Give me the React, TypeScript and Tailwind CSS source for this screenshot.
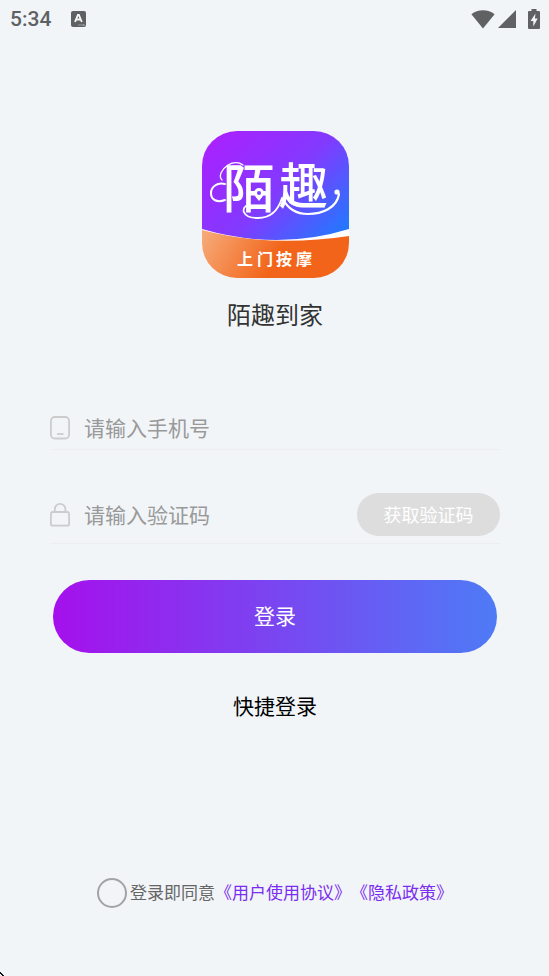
import { useState } from "react";

const fontStack = "font-['Roboto','Noto_Sans_CJK_SC',sans-serif]";

function StatusBar() {
  return (
    <header className="flex h-[38px] items-center justify-between pr-[9px] pl-[10px] text-[#5f6163]">
      <div className="flex items-center gap-5">
        <span className="text-[21px] leading-[38px] font-medium">5:34</span>
        <svg className="h-4 w-[15px]" viewBox="0 0 15 16" aria-hidden="true">
          <rect width="15" height="16" rx="2" fill="currentColor" />
          <path d="M4 11 6.9 3.8h1L10.8 11M5.2 8.5h4.4" fill="none" stroke="#f8f8f8" strokeWidth="1.8" />
          <path d="M7.5 14h1m1 0h1m1 0h2" stroke="#d4d4d4" strokeWidth="1" />
        </svg>
      </div>
      <div className="flex items-center">
        <svg className="h-[19px] w-6" viewBox="0 0 24 19" aria-hidden="true">
          <path d="M12 18.5 .4 4.3C3.6 1.8 7.6.3 12 .3s8.400 1.500 11.600 4Z" fill="currentColor" />
        </svg>
        <svg className="ml-[3px] h-[18px] w-[18px]" viewBox="0 0 18 18" aria-hidden="true">
          <path d="M0 18 18 0v18Z" fill="currentColor" />
        </svg>
        <svg className="ml-3 h-5 w-[12px]" viewBox="0 0 12 20" aria-hidden="true">
          <path d="M3.500 0h5v2H11q1 0 1 1v16q0 1-1 1H1q-1 0-1-1V3q0-1 1-1h2.500Z" fill="currentColor" />
          <path d="M7.500 4.500 2.500 12h2.800v5.500L9.700 9.500H6.900Z" fill="#f1f5f8" />
        </svg>
      </div>
    </header>
  );
}

function Logo() {
  return (
    <svg className="h-[147px] w-[147px]" viewBox="0 0 147 147" role="img" aria-label="陌趣 上门按摩">
      <defs>
        <linearGradient id="sky" gradientUnits="userSpaceOnUse" x1="20" y1="0" x2="135" y2="115">
          <stop offset="0" stopColor="#a822ff" />
          <stop offset="0.5" stopColor="#823aff" />
          <stop offset="1" stopColor="#1c7cff" />
        </linearGradient>
        <linearGradient id="ground" gradientUnits="userSpaceOnUse" x1="5" y1="98" x2="70" y2="135">
          <stop offset="0" stopColor="#f6a977" />
          <stop offset="1" stopColor="#f26419" />
        </linearGradient>
        <clipPath id="tile">
          <rect width="147" height="147" rx="35" />
        </clipPath>
      </defs>
      <g clipPath="url(#tile)">
        <rect width="147" height="147" fill="#fff" />
        <path d="M0 0H147V98Q76 120 0 98Z" fill="url(#sky)" />
        <path d="M0 99Q68 117 147 105V147H0Z" fill="url(#ground)" />
      </g>
      <text x="21" y="77" fontSize="52" fontWeight="500" fill="#fff">陌</text>
      <text x="77" y="73" fontSize="49" fontWeight="500" fill="#fff">趣</text>
      <g fill="none" stroke="#fff" strokeLinecap="round">
        <path d="M23 53C15 51 9 56 9 62c0 7 6 10 14 7" strokeWidth="2" />
        <path d="M20 49C16 45 20 38 26 34c5-3 11-3 15 0" strokeWidth="1.300" />
        <path d="M46 74C39 76 39 87 56 87c12 0 20-7 24-20" strokeWidth="1.800" />
        <path d="M81 68c5 10 14 15 25 15 14 0 29-6 31-20" strokeWidth="2.200" />
      </g>
      <circle cx="135" cy="61" r="2.600" fill="#fff" />
      <path d="M57 70c-2-3-5-5-5-8a5 5 0 0 1 10 0c0 3-3 5-5 8Z" fill="#fff" />
      <circle cx="57" cy="62" r="2" fill="#7840ff" />
      <text x="35 55 74 94" y="134" fontSize="16" fontWeight="700" fill="#fff">上门按摩</text>
    </svg>
  );
}

function PhoneIcon() {
  return (
    <svg className="h-6 w-5 shrink-0" viewBox="0 0 20 24" fill="none" stroke="#cccccc" strokeWidth="1.800" aria-hidden="true">
      <rect x="0.900" y="1" width="18.200" height="21.500" rx="4" />
      <path d="M7 18h6.500" strokeWidth="1.800" />
    </svg>
  );
}

function LockIcon() {
  return (
    <svg className="h-6 w-5 shrink-0" viewBox="0 0 20 24" fill="none" stroke="#cccccc" strokeWidth="1.800" aria-hidden="true">
      <rect x="0.900" y="9" width="18.200" height="13.700" rx="2" />
      <path d="M4.800 9V6.200a5.300 5.300 0 0 1 10.600 0V9" />
    </svg>
  );
}

const inputStyle =
  "h-8 min-w-0 flex-1 bg-transparent pt-0.5 text-[21px] text-[#333333] outline-none placeholder:text-[#999999] placeholder:opacity-100";

export default function App() {
  const [agreed, setAgreed] = useState(false);

  return (
    <div className={`relative flex min-h-screen flex-col bg-[#f1f5f8] ${fontStack}`}>
      <StatusBar />
      <main className="flex flex-1 flex-col pl-px">
        <div className="flex flex-col items-center pt-[93px]">
          <Logo />
          <h1 className="mt-5 text-[24px] leading-9 text-[#333333]">陌趣到家</h1>
        </div>

        <form className="px-[49px] pt-[72px]" onSubmit={(e) => e.preventDefault()}>
          <div className="flex h-[44px] items-center gap-[14px] border-b border-[#eeeeee]">
            <label htmlFor="phone" aria-label="手机号">
              <PhoneIcon />
            </label>
            <input id="phone" type="tel" placeholder="请输入手机号" className={inputStyle} />
          </div>
          <div className="mt-[43px] flex h-[51px] items-start border-b border-[#eeeeee]">
            <div className="flex h-[43px] min-w-0 flex-1 items-center gap-[14px]">
              <label htmlFor="code" aria-label="验证码">
                <LockIcon />
              </label>
              <input id="code" type="text" inputMode="numeric" placeholder="请输入验证码" className={inputStyle} />
              <button type="button" className="h-[43px] w-[143px] rounded-full bg-[#dddddd] pt-0.5 text-[18px] text-white">
                获取验证码
              </button>
            </div>
          </div>
          <div className="px-[3px] pt-9">
            <button
              type="submit"
              className="h-[73px] w-full rounded-full bg-linear-to-r/srgb from-[#a510ec] to-[#4e7bf6] pt-0.5 text-[21px] text-white"
            >
              登录
            </button>
          </div>
        </form>

        <button type="button" className="mx-auto mt-9 h-9 pt-0.5 text-[21px] text-black">
          快捷登录
        </button>

        <div className="mt-auto flex items-center justify-center pb-[68px] text-[17px] leading-[30px] text-[#666666]">
          <label className="flex items-center gap-[3px]">
            <input
              type="checkbox"
              checked={agreed}
              onChange={(e) => setAgreed(e.target.checked)}
              className="size-[30px] appearance-none rounded-full border-2 border-[#a3a3a3] checked:bg-[#7b2cf0]"
            />
            登录即同意
          </label>
          <a href="#agreement" className="text-[#7b2cf0]">《用户使用协议》</a>
          <a href="#privacy" className="text-[#7b2cf0]">《隐私政策》</a>
        </div>
      </main>
      <svg className="absolute bottom-0 left-0 h-1 w-1" viewBox="0 0 4 4" aria-hidden="true">
        <path d="M0 0h1v1h1v1h1v1h1v1H2V3H1V2H0Z" fill="#111111" />
      </svg>
    </div>
  );
}
